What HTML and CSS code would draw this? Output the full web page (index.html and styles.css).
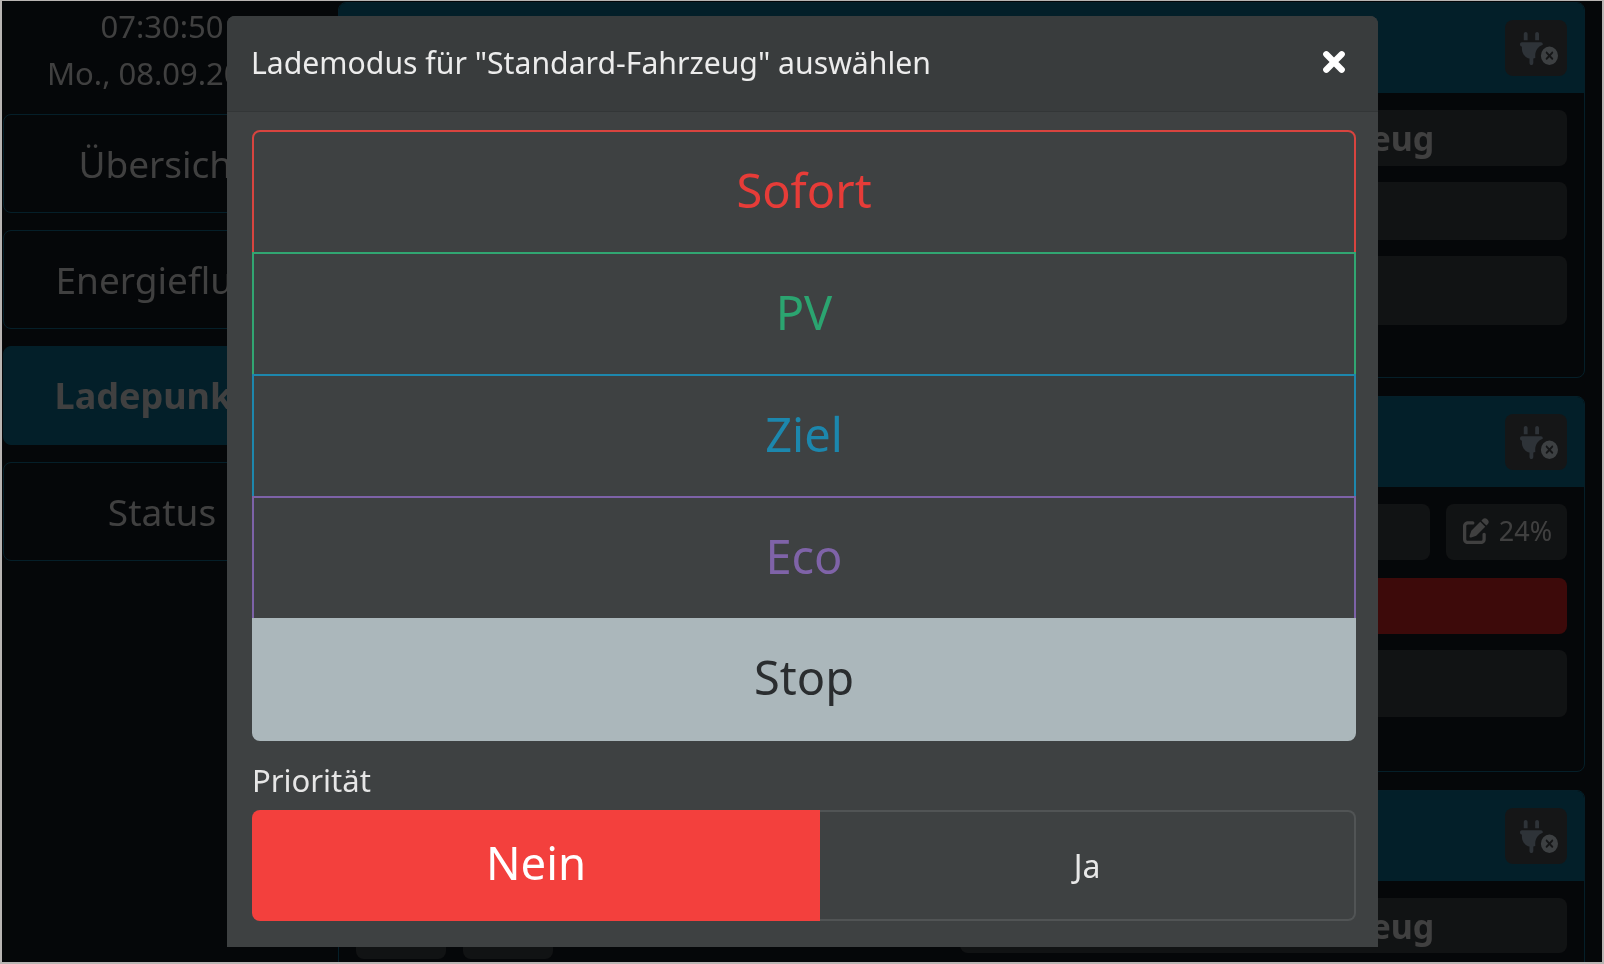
FILE: index.html
```html
<!DOCTYPE html>
<html lang="de">
<head>
<meta charset="utf-8">
<title>Lademodus</title>
<link rel="stylesheet" href="styles.css">
</head>
<body>
<div class="frame">
  <div class="app">
    <aside class="sidebar">
      <div class="clock">
        <div class="clock-line">07:30:50</div>
        <div class="clock-line">Mo., 08.09.2025</div>
      </div>
      <nav class="nav">
        <a class="nav-item">Übersicht</a>
        <a class="nav-item">Energiefluss</a>
        <a class="nav-item active">Ladepunkte</a>
        <a class="nav-item">Status</a>
      </nav>
    </aside>
    <main class="cards">
      <section class="card card-first">
        <header class="card-head">
          <span class="icon-btn"><svg class="plug" viewBox="0 0 640 512" preserveAspectRatio="none"><use href="#plug-x"/></svg></span>
        </header>
        <div class="card-body">
          <div class="row h56"><div class="value"><b>Standard-Fahrzeug</b></div></div>
          <div class="row h58"><div class="value"></div></div>
          <div class="row h69"><div class="value"></div></div>
        </div>
      </section>
      <section class="card card-second">
        <header class="card-head">
          <span class="icon-btn"><svg class="plug" viewBox="0 0 640 512" preserveAspectRatio="none"><use href="#plug-x"/></svg></span>
        </header>
        <div class="card-body">
          <div class="row h56 pair">
            <div class="value"></div>
            <div class="value soc"><svg class="edit" viewBox="0 0 512 512"><path d="M471.6 21.7c-21.9-21.9-57.3-21.9-79.2 0L362.3 51.7l97.9 97.9 30.1-30.1c21.9-21.9 21.9-57.3 0-79.2L471.6 21.7zm-299.2 220c-6.1 6.1-10.8 13.6-13.5 21.9l-29.6 88.8c-2.9 8.6-.6 18.1 5.8 24.6s15.9 8.7 24.6 5.8l88.8-29.6c8.2-2.7 15.7-7.4 21.9-13.5L437.7 172.3 339.7 74.3 172.4 241.7zM96 64C43 64 0 107 0 160V416c0 53 43 96 96 96H352c53 0 96-43 96-96V320c0-17.7-14.3-32-32-32s-32 14.3-32 32v96c0 17.7-14.3 32-32 32H96c-17.7 0-32-14.3-32-32V160c0-17.7 14.3-32 32-32h96c17.7 0 32-14.3 32-32s-14.3-32-32-32H96z"/></svg>24%</div>
          </div>
          <div class="row h56"><div class="value stop"></div></div>
          <div class="row h67"><div class="value"></div></div>
        </div>
      </section>
      <section class="card card-third">
        <header class="card-head">
          <span class="icon-btn"><svg class="plug" viewBox="0 0 640 512" preserveAspectRatio="none"><use href="#plug-x"/></svg></span>
        </header>
        <div class="card-body">
          <div class="row h61">
            <div class="chips"><span class="chip"></span><span class="chip"></span></div>
            <div class="value"><b>Standard-Fahrzeug</b></div>
          </div>
        </div>
      </section>
    </main>
  </div>

  <div class="backdrop"></div>

  <div class="modal" role="dialog">
    <div class="modal-head">
      <h2 class="modal-title">Lademodus für "Standard-Fahrzeug" auswählen</h2>
      <button class="close" aria-label="Schließen"><svg viewBox="0 0 20 20"><path d="M4.5 4.5L15.5 15.5M15.5 4.5L4.5 15.5"/></svg></button>
    </div>
    <div class="modal-body">
      <div class="modes">
        <button class="mode sofort">Sofort</button>
        <button class="mode pv">PV</button>
        <button class="mode ziel">Ziel</button>
        <button class="mode eco">Eco</button>
        <button class="mode halt">Stop</button>
      </div>
      <div class="prio-label">Priorität</div>
      <div class="prio">
        <button class="prio-btn on">Nein</button>
        <button class="prio-btn off">Ja</button>
      </div>
    </div>
  </div>
</div>

<svg class="defs" width="0" height="0">
  <defs>
    <g id="plug-x">
      <path class="plug-body" d="M96 0C78.3 0 64 14.3 64 32v96h64V32c0-17.7-14.3-32-32-32zM288 0c-17.7 0-32 14.3-32 32v96h64V32c0-17.7-14.3-32-32-32zM32 160c-17.7 0-32 14.3-32 32s14.3 32 32 32v32c0 77.4 55 142 128 156.8V480c0 17.7 14.3 32 32 32s32-14.3 32-32V412.8c12.3-2.5 24.1-6.4 35.1-11.5c-2.1-10.8-3.1-21.9-3.1-33.3c0-80.3 53.8-148 127.3-169.2c.5-2.2 .7-4.5 .7-6.8c0-17.7-14.3-32-32-32H32z"/>
      <path class="plug-x" d="M496 512a144 144 0 1 0 0-288 144 144 0 1 0 0 288zm59.3-180.7L518.6 368l36.7 36.7c6.2 6.2 6.2 16.4 0 22.6s-16.4 6.2-22.6 0L496 390.6l-36.7 36.7c-6.2 6.2-16.4 6.2-22.6 0s-6.2-16.4 0-22.6L473.4 368l-36.7-36.7c-6.2-6.2-6.2-16.4 0-22.6s16.4-6.2 22.6 0L496 345.4l36.7-36.7c6.2-6.2 16.4-6.2 22.6 0s6.2 16.4 0 22.6z"/>
    </g>
  </defs>
</svg>
</body>
</html>
```
FILE: styles.css
```css
* { box-sizing: border-box; }
html, body { margin: 0; height: 100%; background: #b9b5b3; overflow: hidden; }
body { font-family: "Noto Sans", "Open Sans", sans-serif; }
.defs { position: absolute; }
.frame { position: relative; margin: 1px 2px 2px 2px; height: 961px; overflow: hidden; background: #0b0e12; filter: blur(.55px); }

.app { display: grid; grid-template-columns: 336px 1fr; height: 100%; color: #808080; }
.sidebar { padding: 0 0 0 1px; }
.clock { width: 318px; height: 113px; padding-top: 2px; text-align: center; font-size: 31px; white-space: nowrap; }
.clock-line { height: 47px; line-height: 47px; }
.nav { display: flex; flex-direction: column; gap: 17px; width: 318px; }
.nav-item { display: flex; align-items: center; justify-content: center; height: 99px; border: 1px solid #0a3f52; border-radius: 8px; font-size: 37px; }
.nav-item.active { background: #063f52; font-weight: 700; font-size: 36px; border-color: #063f52; }

.cards { display: flex; flex-direction: column; padding-right: 17px; gap: 18px; }
.card-first { margin-top: 1px; }
.card { border: 1px solid #0a3f52; border-radius: 8px; }
.card-head { display: flex; justify-content: flex-end; align-items: center; height: 90px; padding-right: 17px; background: #063f52; border-radius: 7px 7px 0 0; }
.icon-btn { display: flex; align-items: center; justify-content: center; width: 62px; height: 56px; padding-left: 5px; background: #2a2c2f; border-radius: 8px; }
.plug { width: 38px; height: 33px; }
.plug-body { fill: #5c6670; }
.plug-x { fill: #7a8084; }
.card-body { display: flex; flex-direction: column; gap: 16px; padding: 17px 17px 54px; }
.card-first .card-body { padding-bottom: 52px; }
.card-third .card-body { padding-bottom: 20px; }
.row { display: flex; justify-content: flex-end; gap: 16px; }
.h56 { height: 56px; }
.h58 { height: 58px; }
.h61 { height: 61px; justify-content: space-between; }
.h67 { height: 67px; }
.h69 { height: 69px; }
.pair { margin-bottom: 2px; }
.value { flex: 0 0 607px; display: flex; align-items: center; justify-content: center; background: #232628; border-radius: 8px; }
.value b { padding-left: 20px; font-size: 34px; color: #808080; }
.h61 .value { height: 55px; }
.pair .value:first-child { flex: 1 1 auto; }
.pair .value.soc { flex: 0 0 121px; gap: 10px; padding: 0 0 3px 2px; font-size: 27px; }
.stop { background: #7a1414; }
.edit { width: 26px; height: 26px; fill: #808080; }
.chips { display: flex; align-self: flex-end; gap: 17px; }
.chip { width: 90px; height: 40px; background: #232628; border-radius: 8px; }

.backdrop { position: absolute; inset: 0; background: rgba(0, 0, 0, .5); }

.modal { position: absolute; left: 225px; top: 15px; width: 1151px; height: 931px; background: #3e4142; border-radius: 8px 8px 0 0; color: #e8e8e8; }
.modal-head { display: flex; justify-content: space-between; align-items: center; height: 96px; padding: 0 25px 3px 24px; background: #393c3d; border-bottom: 1px solid #333637; border-radius: 8px 8px 0 0; }
.modal-title { margin: 0; font-size: 30.2px; font-weight: 400; color: #ececec; white-space: nowrap; }
.close { width: 28px; height: 28px; padding: 0; margin-right: 5px; border: 0; background: none; }
.close svg { display: block; width: 28px; height: 28px; fill: none; stroke: #fff; stroke-width: 4.5; stroke-linecap: round; }
.modal-body { padding: 18px 22px 0 25px; }
.modes { display: flex; flex-direction: column; }
.mode { display: block; width: 100%; height: 124px; margin: 0 0 -2px; padding-bottom: 6px; background: transparent; border: 2px solid; font: 400 47px "Noto Sans", sans-serif; }
.sofort { color: #e63c38; border-color: #d8443f; border-radius: 8px 8px 0 0; }
.pv { color: #2ba470; border-color: #31a672; }
.ziel { color: #1c87ad; border-color: #1d87ad; }
.eco { color: #7f63a8; border-color: #7d62a8; }
.halt { height: 123px; color: #2a2d2f; background: #abb7bb; border-color: #abb7bb; border-radius: 0 0 8px 8px; margin-bottom: 0; }
.prio-label { margin-top: 22px; height: 47px; line-height: 34px; font-size: 31px; color: #e6e6e6; }
.prio { display: flex; height: 111px; }
.prio-btn { height: 100%; font-family: "Noto Sans", sans-serif; }
.prio-btn.on { flex: 0 0 568px; background: #f3403d; color: #fff; border: 0; border-radius: 8px 0 0 8px; font-size: 45.5px; padding-bottom: 8px; }
.prio-btn.off { flex: 1; background: transparent; color: #e8e8e8; border: 2px solid #515455; border-left: 0; border-radius: 0 8px 8px 0; font-size: 32px; padding-bottom: 2px; }
```
